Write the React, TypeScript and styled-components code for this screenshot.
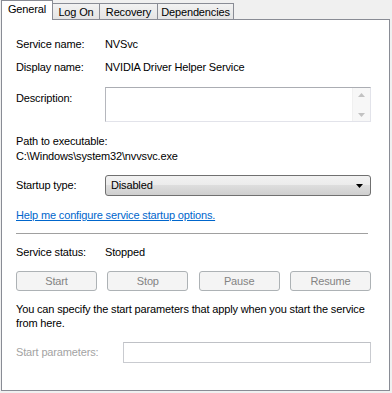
import styled, { createGlobalStyle, css } from "styled-components";

const GlobalStyle = createGlobalStyle`
	html, body {
		margin: 0;
		padding: 0;
		background: #f0f0f0;
	}
	body {
		font-family: "Liberation Sans", Arial, sans-serif;
		font-size: 11px;
		letter-spacing: -0.15px;
		color: #000;
	}
`;

const Dialog = styled.div`
	width: 392px;
	height: 393px;
	box-sizing: border-box;
	padding: 0 2px 0 1px;
	background: #f0f0f0;
`;

const TabStrip = styled.div`
	display: flex;
	align-items: flex-end;
	height: 19px;
`;

const Tab = styled.div<{ $active?: boolean; $width: number }>`
	position: relative;
	display: flex;
	align-items: center;
	justify-content: center;
	box-sizing: border-box;
	width: ${({ $width }) => $width}px;
	border: 1px solid #898c95;
	border-bottom: none;
	margin-left: -1px;
	&:first-child {
		margin-left: 0;
	}
	${({ $active }) =>
		$active
			? css`
					height: 20px;
					margin-bottom: -1px;
					padding-bottom: 3px;
					background: #fff;
					z-index: 2;
			  `
			: css`
					height: 16px;
					background: linear-gradient(#f2f2f2, #e4e4e4);
			  `}
`;

const Panel = styled.div`
	box-sizing: border-box;
	height: 372px;
	border: 1px solid #898c95;
	background: #fff;
	padding: 17px 18px 0 14px;
	display: flex;
	flex-direction: column;
`;

const Row = styled.div<{ $gap?: number; $top?: boolean }>`
	display: flex;
	align-items: ${({ $top }) => ($top ? "flex-start" : "center")};
	margin-top: ${({ $gap }) => $gap ?? 0}px;
	line-height: 15px;
`;

const Label = styled.div<{ $width?: number; $muted?: boolean; $pad?: number }>`
	flex: none;
	width: ${({ $width }) => $width ?? 89}px;
	padding-top: ${({ $pad }) => $pad ?? 0}px;
	color: ${({ $muted }) => ($muted ? "#a3a3a3" : "#000")};
`;

const Line = styled.div<{ $gap?: number }>`
	line-height: 15px;
	margin-top: ${({ $gap }) => $gap ?? 0}px;
`;

const TextArea = styled.div`
	flex: 1;
	display: flex;
	justify-content: flex-end;
	height: 35px;
	box-sizing: border-box;
	border: 1px solid #e2e3ea;
	border-top-color: #abadb3;
	border-left-color: #b5b7bd;
`;

const ScrollBar = styled.div`
	width: 17px;
	display: flex;
	flex-direction: column;
	justify-content: space-between;
	align-items: center;
	padding: 5px 0 4px;
	background: #f7f7f7;
	border-left: 1px solid #f0f0f0;
`;

const Combo = styled.div`
	flex: 1;
	height: 21px;
	box-sizing: border-box;
	display: flex;
	align-items: center;
	justify-content: space-between;
	padding: 0 7px 0 5px;
	border: 1px solid #707070;
	border-radius: 3px;
	background: linear-gradient(#f2f2f2 0%, #ebebeb 50%, #dddddd 50%, #cfcfcf 100%);
`;

const Link = styled.a`
	color: #0066cc;
	text-decoration: underline;
	cursor: pointer;
`;

const Separator = styled.div`
	height: 1px;
	margin: 10px 3px 0 0;
	background: #a0a0a0;
`;

const ButtonRow = styled.div`
	display: flex;
	justify-content: space-between;
	margin-top: 11px;
`;

const Button = styled.button`
	width: 81px;
	height: 20px;
	box-sizing: border-box;
	padding: 0;
	border: 1px solid #adb2b5;
	border-radius: 3px;
	background: #f4f4f4;
	color: #838383;
	font-family: "Liberation Sans", Arial, sans-serif;
	font-size: 11px;
	letter-spacing: -0.15px;
`;

const Paragraph = styled.p`
	margin: 11px 0 0;
	line-height: 14px;
`;

const Input = styled.div`
	flex: 1;
	height: 21px;
	box-sizing: border-box;
	border: 1px solid #c9cbd0;
	border-top-color: #bfc1c6;
	background: #fff;
`;

const ArrowUp = () => (
	<svg width="7" height="4" viewBox="0 0 7 4">
		<path d="M0 4 L3.5 0 L7 4 Z" fill="#c2c2c2" />
	</svg>
);

const ArrowDown = ({ color = "#c2c2c2" }: { color?: string }) => (
	<svg width="7" height="4" viewBox="0 0 7 4">
		<path d="M0 0 L7 0 L3.5 4 Z" fill={color} />
	</svg>
);

const tabs = [
	{ name: "General", width: 52 },
	{ name: "Log On", width: 48 },
	{ name: "Recovery", width: 59 },
	{ name: "Dependencies", width: 77 },
];

const App = () => {
	return (
		<>
			<GlobalStyle />
			<Dialog>
				<TabStrip>
					{tabs.map((t, i) => (
						<Tab key={t.name} $active={i === 0} $width={t.width}>
							{t.name}
						</Tab>
					))}
				</TabStrip>
				<Panel>
					<Row>
						<Label>Service name:</Label>
						<div>NVSvc</div>
					</Row>
					<Row $gap={8}>
						<Label>Display name:</Label>
						<div>NVIDIA Driver Helper Service</div>
					</Row>
					<Row $gap={12} $top>
						<Label $pad={4}>Description:</Label>
						<TextArea>
							<ScrollBar>
								<ArrowUp />
								<ArrowDown />
							</ScrollBar>
						</TextArea>
					</Row>
					<Line $gap={12}>Path to executable:</Line>
					<Line>C:\Windows\system32\nvvsvc.exe</Line>
					<Row $gap={11}>
						<Label>Startup type:</Label>
						<Combo>
							<span>Disabled</span>
							<ArrowDown color="#000" />
						</Combo>
					</Row>
					<Line $gap={12}>
						<Link>Help me configure service startup options.</Link>
					</Line>
					<Separator />
					<Row $gap={11}>
						<Label>Service status:</Label>
						<div>Stopped</div>
					</Row>
					<ButtonRow>
						<Button disabled>Start</Button>
						<Button disabled>Stop</Button>
						<Button disabled>Pause</Button>
						<Button disabled>Resume</Button>
					</ButtonRow>
					<Paragraph>
						You can specify the start parameters that apply when you start the service from here.
					</Paragraph>
					<Row $gap={12}>
						<Label $width={107} $muted>
							Start parameters:
						</Label>
						<Input />
					</Row>
				</Panel>
			</Dialog>
		</>
	);
};

export default App;
